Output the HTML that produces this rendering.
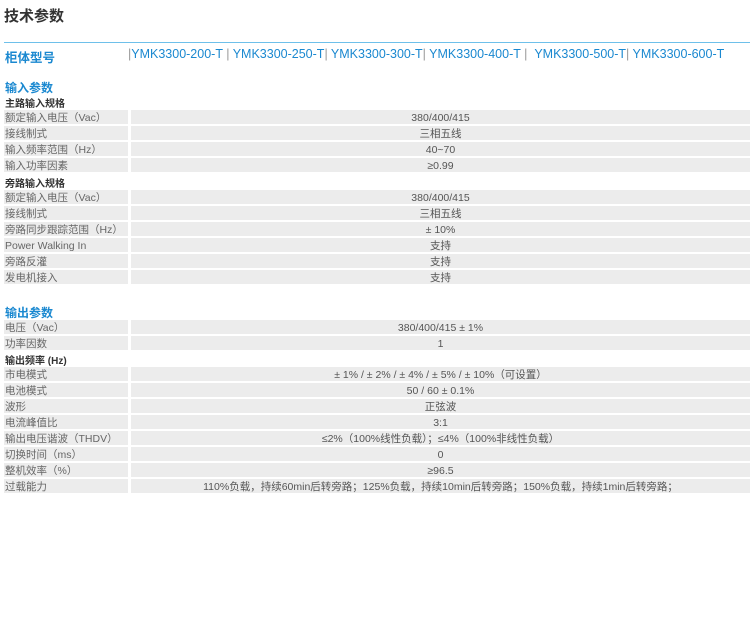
<!DOCTYPE html>
<html><head><meta charset="utf-8"><style>
body{margin:0;width:750px;height:630px;background:#fff;position:relative;overflow:hidden;font-family:"Liberation Sans","Noto Sans CJK SC",sans-serif;}
.a{position:absolute;white-space:nowrap;}
.t{left:4px;top:5px;font-size:15px;font-weight:bold;color:#333;}
.line{left:4px;top:42px;width:746px;height:1px;background:#6ec0ea;}
.h{font-size:12.5px;color:#1a88d0;top:47px;}
.sec{font-size:12px;color:#1a88d0;font-weight:bold;left:5px;}
.sub{font-size:10px;color:#333;font-weight:bold;left:5px;}
.l{left:4px;width:124px;height:14px;background:#ececec;font-size:10.5px;color:#666;line-height:17px;padding-left:1px;box-sizing:border-box;}
.v{left:131px;width:619px;height:14px;background:#ececec;font-size:10.5px;color:#555;line-height:17px;text-align:center;}
.sep{color:#999;}
</style></head><body>
<div class="a t">技术参数</div>
<div class="a line"></div>
<div class="a h" style="left:5px;font-weight:bold;">柜体型号</div>
<div class="a h" style="left:128px;"><span class="sep">|</span>YMK3300-200-T <span class="sep">|</span> YMK3300-250-T<span class="sep">|</span> YMK3300-300-T<span class="sep">|</span> YMK3300-400-T <span class="sep">|</span> &nbsp;YMK3300-500-T<span class="sep">|</span> YMK3300-600-T</div>

<div class="a sec" style="top:79px;">输入参数</div>
<div class="a sub" style="top:95px;">主路输入规格</div>
<div class="a l" style="top:110px;">额定输入电压（Vac）</div><div class="a v" style="top:110px;">380/400/415</div>
<div class="a l" style="top:126px;">接线制式</div><div class="a v" style="top:126px;">三相五线</div>
<div class="a l" style="top:142px;">输入频率范围（Hz）</div><div class="a v" style="top:142px;">40~70</div>
<div class="a l" style="top:158px;">输入功率因素</div><div class="a v" style="top:158px;">≥0.99</div>
<div class="a sub" style="top:175px;">旁路输入规格</div>
<div class="a l" style="top:190px;">额定输入电压（Vac）</div><div class="a v" style="top:190px;">380/400/415</div>
<div class="a l" style="top:206px;">接线制式</div><div class="a v" style="top:206px;">三相五线</div>
<div class="a l" style="top:222px;">旁路同步跟踪范围（Hz）</div><div class="a v" style="top:222px;">± 10%</div>
<div class="a l" style="top:238px;">Power Walking In</div><div class="a v" style="top:238px;">支持</div>
<div class="a l" style="top:254px;">旁路反灌</div><div class="a v" style="top:254px;">支持</div>
<div class="a l" style="top:270px;">发电机接入</div><div class="a v" style="top:270px;">支持</div>

<div class="a sec" style="top:304px;">输出参数</div>
<div class="a l" style="top:320px;">电压（Vac）</div><div class="a v" style="top:320px;">380/400/415 ± 1%</div>
<div class="a l" style="top:336px;">功率因数</div><div class="a v" style="top:336px;">1</div>
<div class="a sub" style="top:352px;">输出频率 (Hz)</div>
<div class="a l" style="top:367px;">市电模式</div><div class="a v" style="top:367px;">± 1% / ± 2% / ± 4% / ± 5% / ± 10%（可设置）</div>
<div class="a l" style="top:383px;">电池模式</div><div class="a v" style="top:383px;">50 / 60 ± 0.1%</div>
<div class="a l" style="top:399px;">波形</div><div class="a v" style="top:399px;">正弦波</div>
<div class="a l" style="top:415px;">电流峰值比</div><div class="a v" style="top:415px;">3:1</div>
<div class="a l" style="top:431px;">输出电压谐波（THDV）</div><div class="a v" style="top:431px;">≤2%（100%线性负载）；≤4%（100%非线性负载）</div>
<div class="a l" style="top:447px;">切换时间（ms）</div><div class="a v" style="top:447px;">0</div>
<div class="a l" style="top:463px;">整机效率（%）</div><div class="a v" style="top:463px;">≥96.5</div>
<div class="a l" style="top:479px;">过载能力</div><div class="a v" style="top:479px;">110%负载，持续60min后转旁路；125%负载，持续10min后转旁路；150%负载，持续1min后转旁路；</div>
</body></html>
